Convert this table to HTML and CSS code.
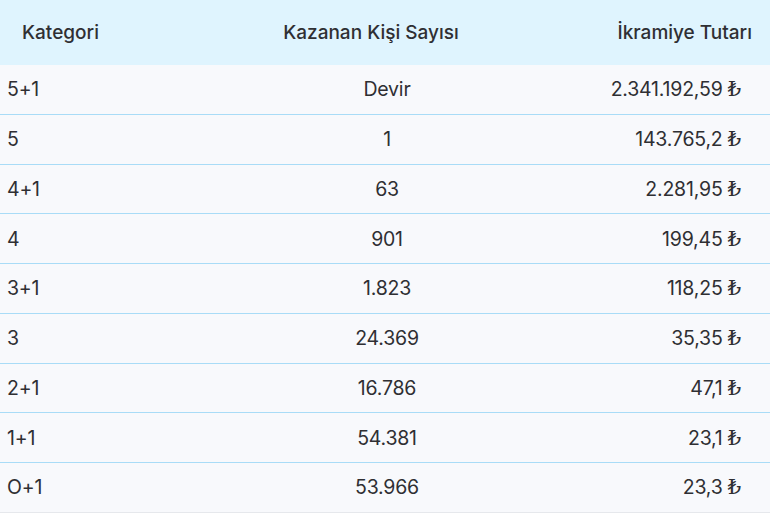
FILE: index.html
```html
<!DOCTYPE html>
<html lang="tr">
<head>
<meta charset="utf-8">
<link rel="stylesheet" href="styles.css">
</head>
<body>
<div class="table">
  <div class="row head">
    <div class="c1">Kategori</div>
    <div class="c2">Kazanan Kişi Sayısı</div>
    <div class="c3">İkramiye Tutarı</div>
  </div>
  <div class="row"><div class="c1">5+1</div><div class="c2">Devir</div><div class="c3">2.341.192,59 <span class="tl">₺</span></div></div>
  <div class="row"><div class="c1">5</div><div class="c2">1</div><div class="c3">143.765,2 <span class="tl">₺</span></div></div>
  <div class="row"><div class="c1">4+1</div><div class="c2">63</div><div class="c3">2.281,95 <span class="tl">₺</span></div></div>
  <div class="row"><div class="c1">4</div><div class="c2">901</div><div class="c3">199,45 <span class="tl">₺</span></div></div>
  <div class="row"><div class="c1">3+1</div><div class="c2">1.823</div><div class="c3">118,25 <span class="tl">₺</span></div></div>
  <div class="row"><div class="c1">3</div><div class="c2">24.369</div><div class="c3">35,35 <span class="tl">₺</span></div></div>
  <div class="row"><div class="c1">2+1</div><div class="c2">16.786</div><div class="c3">47,1 <span class="tl">₺</span></div></div>
  <div class="row"><div class="c1">1+1</div><div class="c2">54.381</div><div class="c3">23,1 <span class="tl">₺</span></div></div>
  <div class="row last"><div class="c1">O+1</div><div class="c2">53.966</div><div class="c3">23,3 <span class="tl">₺</span></div></div>
</div>
</body>
</html>
```
FILE: styles.css
```css
html, body {
  margin: 0;
  padding: 0;
  background: #ffffff;
}
body {
  font-family: Inter, "Noto Sans", sans-serif;
  font-size: 19.5px;
  color: #2f2f33;
}
.table {
  width: 770px;
}
.row {
  display: grid;
  grid-template-columns: 250px 260px 224px;
  align-items: center;
  height: 48.75px;
  background: #f8f9fc;
  border-bottom: 1px solid #a9dcf7;
  padding: 0 29px 0 7px;
  letter-spacing: -0.2px;
}
.row.last {
  border-bottom-color: #e6e8ec;
}
.row.head {
  grid-template-columns: 219px 260px 251px;
  height: 65px;
  background: #dff4fe;
  border-bottom: none;
  padding: 0 18px 0 22px;
  font-size: 19px;
  font-weight: 500;
  letter-spacing: 0;
}
.c1 { text-align: left; white-space: nowrap; }
.c2 { text-align: center; white-space: nowrap; }
.c3 { text-align: right; white-space: nowrap; }
.tl {
  font-family: "DejaVu Serif", serif;
  font-size: 21px;
  line-height: 1;
}
```
